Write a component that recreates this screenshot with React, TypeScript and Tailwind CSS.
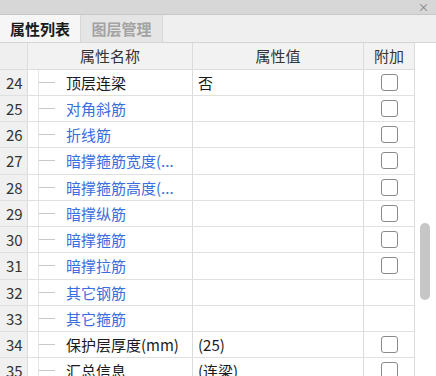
import React from 'react';

type Row = { no: number; name: string; value?: string; blue?: boolean; check: boolean };

const ROWS: Row[] = [
  { no: 24, name: '顶层连梁', value: '否', check: true },
  { no: 25, name: '对角斜筋', blue: true, check: true },
  { no: 26, name: '折线筋', blue: true, check: true },
  { no: 27, name: '暗撑箍筋宽度(...', blue: true, check: true },
  { no: 28, name: '暗撑箍筋高度(...', blue: true, check: true },
  { no: 29, name: '暗撑纵筋', blue: true, check: true },
  { no: 30, name: '暗撑箍筋', blue: true, check: true },
  { no: 31, name: '暗撑拉筋', blue: true, check: true },
  { no: 32, name: '其它钢筋', blue: true, check: false },
  { no: 33, name: '其它箍筋', blue: true, check: false },
  { no: 34, name: '保护层厚度(mm)', value: '(25)', check: true },
  { no: 35, name: '汇总信息', value: '(连梁)', check: true },
];

const GRID = 'grid grid-cols-[28px_165px_171px_51px]';

function Checkbox() {
  return <div className="w-[17px] h-[17px] rounded-[3px] border-[1.5px] border-[#8a8a8a] bg-white" />;
}

export default function App() {
  return (
    <div
      className="w-[436px] h-[376px] overflow-hidden bg-white flex flex-col text-[15px] text-[#1a1a1a]"
      style={{ fontFamily: '"Noto Sans CJK SC", "Noto Sans", sans-serif' }}
    >
      <div className="h-[15px] shrink-0 bg-[#d7d7d7] border-b border-[#c8c8c8] flex items-center justify-end pr-[7px]">
        <span className="text-[11px] leading-none text-[#7a7a7a]">×</span>
      </div>

      <div className="h-[28px] shrink-0 bg-[#efefef] flex border-b border-[#d4d4d4]">
        <div className="w-[81px] h-full bg-[#f6f6f6] border-r border-[#d8d8d8] flex items-center justify-center font-bold leading-none">
          属性列表
        </div>
        <div className="w-[82px] h-full bg-[#e5e5e5] border-r border-[#d8d8d8] flex items-center justify-center font-bold leading-none text-[#a3a3a3]">
          图层管理
        </div>
      </div>

      <div className="flex flex-1 min-h-0">
        <div className="w-[415px] shrink-0">
          <div className={`${GRID} h-[26.5px] bg-[#f2f2f2] border-b border-[#dcdcdc] text-[#333]`}>
            <div className="bg-[#efefef] border-r border-[#dcdcdc]" />
            <div className="border-r border-[#dcdcdc] flex items-center justify-center leading-none">属性名称</div>
            <div className="border-r border-[#dcdcdc] flex items-center justify-center leading-none">属性值</div>
            <div className="border-r border-[#dcdcdc] flex items-center justify-center leading-none">附加</div>
          </div>

          {ROWS.map((r) => (
            <div key={r.no} className={`${GRID} h-[26.25px] border-b border-[#e0e0e0]`}>
              <div className="bg-[#f0f0f0] border-r border-[#dcdcdc] flex items-center pl-[6px] leading-none text-[#333]">
                {r.no}
              </div>
              <div className="border-r border-[#dcdcdc] flex items-center pl-[10px] leading-none">
                <div className="w-px h-full bg-[#e6e6e6]" />
                <div className="w-[16px] h-px bg-[#c8c8c8]" />
                <span className={`ml-[11px] whitespace-nowrap ${r.blue ? 'text-[#3a6de0]' : ''}`}>{r.name}</span>
              </div>
              <div className="border-r border-[#dcdcdc] flex items-center pl-[5px] leading-none whitespace-nowrap">
                {r.value}
              </div>
              <div className="border-r border-[#dcdcdc] flex items-center justify-center">
                {r.check && <Checkbox />}
              </div>
            </div>
          ))}
        </div>

        <div className="flex-1 bg-white pl-[5px] pt-[180px]">
          <div className="w-[10px] h-[77px] rounded-full bg-[#c6c6c6]" />
        </div>
      </div>
    </div>
  );
}
